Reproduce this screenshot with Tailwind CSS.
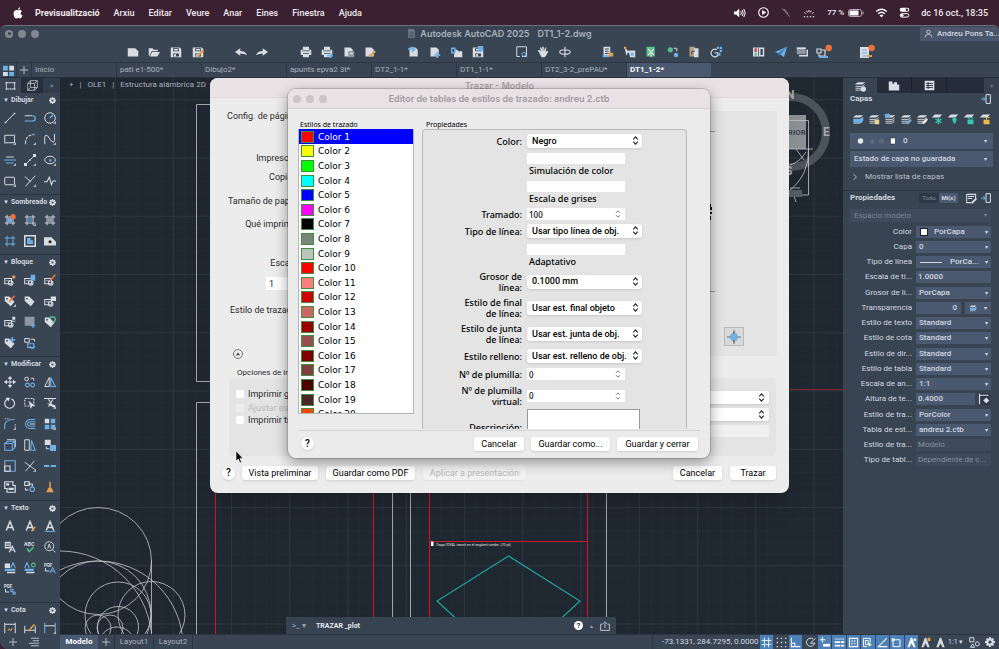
<!DOCTYPE html>
<html lang="ca">
<head>
    <meta charset="UTF-8">
    <meta name="viewport" content="width=device-width, initial-scale=1.0">
    <title>Autodesk AutoCAD 2025 - DT1_1-2.dwg</title>
    <script src="https://cdn.jsdelivr.net/npm/@tailwindcss/browser@4"></script>
</head>
<body class="h-screen overflow-hidden bg-[#3a2031] font-['Roboto',sans-serif] text-[8px] leading-[12px] text-[#d3d9e1]">
    <div class="flex h-full flex-col">
        <!-- Barra de menú -->
        <nav class="flex h-[25px] shrink-0 items-center justify-between pl-3 pr-[11px] text-[9px] font-medium text-[#f0e9ed]">
            <div class="flex items-center gap-[14px]">
                <svg data-icon="apple" class="-mr-[3px] h-3 w-3"></svg>
                <a href="#" class="font-bold">Previsualització</a>
                <a href="#">Arxiu</a>
                <a href="#">Editar</a>
                <a href="#">Veure</a>
                <a href="#">Anar</a>
                <a href="#">Eines</a>
                <a href="#">Finestra</a>
                <a href="#">Ajuda</a>
            </div>
            <div class="flex items-center gap-[11px]">
                <svg data-icon="volume" class="h-3 w-[14px]"></svg>
                <svg data-icon="play" class="size-[11px]"></svg>
                <svg data-icon="micoff" class="size-[11px]"></svg>
                <svg data-icon="sunrise" class="h-3 w-[14px]"></svg>
                <span class="flex items-center gap-1 text-[8px]">77 % <svg data-icon="battery" class="size-4"></svg></span>
                <svg data-icon="wifi" class="h-3 w-[13px]"></svg>
                <svg data-icon="control" class="size-[11px]"></svg>
                <span>dc 16 oct., 18:35</span>
            </div>
        </nav>

        <!-- Ventana de AutoCAD -->
        <div class="flex min-h-0 flex-1 flex-col overflow-hidden rounded-t-md rounded-bl-lg border-t border-[#6b6f7e] bg-[#394553]">
            <header class="flex h-[36px] shrink-0 flex-col">
                <div class="grid h-[15px] grid-cols-[1fr_auto_1fr] items-center">
                    <div class="flex gap-[5px] pl-[5px]">
                        <span class="flex size-2 items-center justify-center rounded-full bg-[#7f8791]"><i class="size-[3px] rounded-full bg-[#394553]"></i></span>
                        <span class="size-2 rounded-full bg-[#7f8791]"></span>
                        <span class="size-2 rounded-full bg-[#7f8791]"></span>
                    </div>
                    <h1 class="flex items-center gap-1 font-['Inter',sans-serif] text-[9px] font-semibold text-[#a9b2bd]">
                        <svg data-icon="dwg" class="size-[9px]"></svg>
                        Autodesk AutoCAD 2025 <span class="ml-1">DT1_1-2.dwg</span>
                    </h1>
                    <button class="flex h-[14px] w-[79px] items-center gap-1 justify-self-end whitespace-nowrap bg-[#4a566b] pl-1 text-[8px] font-medium">
                        <svg data-icon="user" class="size-[9px] shrink-0"></svg>Andreu Pons Ta...
                    </button>
                </div>
                <div id="toolbar" class="ml-[122px] grid w-[756px] flex-1 grid-cols-35 items-center"></div>
            </header>

            <!-- Pestañas de dibujos -->
            <div id="file-tabs" class="flex h-[15px] shrink-0 border-t border-[#2c3643] text-[#a9b2bd]">
                <button class="flex w-4 items-center justify-center" aria-label="Inicio"><svg data-icon="tiles" class="size-[11px]"></svg></button>
                <button class="flex w-[15px] items-center justify-center border-l border-[#2c3643]" aria-label="Nuevo"><svg data-icon="plus" class="size-2"></svg></button>
            </div>

            <div class="flex min-h-0 flex-1 border-t border-[#273040]">
                <!-- Paleta de herramientas -->
                <aside class="flex w-[60px] shrink-0 flex-col bg-[#3a4554]">
                    <div class="flex h-[15px] shrink-0">
                        <button class="flex w-[21px] items-center justify-center" aria-label="2D"><svg data-icon="rectangle" class="size-[11px]"></svg></button>
                        <button class="flex w-[22px] items-center justify-center bg-[#26303c]" aria-label="3D"><svg data-icon="cube" class="size-[11px]"></svg></button>
                        <button class="flex-1 bg-[#323d4b] text-[#8b96a3]">»</button>
                    </div>
                    <div id="palette" class="min-h-0 flex-1 overflow-hidden"></div>
                    <div class="flex h-[15px] shrink-0 items-center gap-3 pl-[9px]">
                        <button aria-label="Añadir"><svg data-icon="plus" class="size-2"></svg></button>
                        <button aria-label="Organizar"><svg data-icon="indent" class="size-[10px]"></svg></button>
                    </div>
                </aside>

                <div class="flex min-w-0 flex-1 flex-col">
                    <div class="flex min-h-0 flex-1">
                        <!-- Área de dibujo -->
                        <main class="relative min-w-0 flex-1 overflow-hidden bg-[#1f2730]">
                            <svg class="absolute inset-0 h-full w-full" viewBox="60 78 783 556" preserveAspectRatio="xMinYMin slice" fill="none" stroke="#c3c7cb" stroke-width=".8">
                                <defs>
                                    <pattern id="minor" x="114.5" y="157.5" width="11.65" height="11.65" patternUnits="userSpaceOnUse"><path d="M0 0H12M0 0V12" stroke="#252e39" stroke-width=".9" /></pattern>
                                    <pattern id="major" x="114.5" y="157.5" width="58.25" height="58.25" patternUnits="userSpaceOnUse"><path d="M0 .5H59M.5 0V59" stroke="#2b3540" stroke-width="1" /></pattern>
                                </defs>
                                <path d="M60 78H843V634H60Z" fill="url(#minor)" stroke="none" />
                                <path d="M60 78H843V634H60Z" fill="url(#major)" stroke="none" />
                                <path d="M300 104.500H196.500V381.500H300M300 402.500H196.500V634M392.500 480V634M410.500 480V634M606.500 480V634" />
                                <g stroke="#d01626" stroke-width="1.1">
                                    <path d="M215.500 480V634" />
                                    <path d="M373.500 480V634" />
                                    <path d="M429.500 480V634" />
                                    <path d="M587.500 480V634" />
                                    <path d="M429.500 541.500H587.500" />
                                </g>
                                <path d="M780 389.500H843" stroke="#8a2632" stroke-width="1" />
                                <path d="M508.500 556L437 601L508.500 667L580 601Z" stroke="#1fa8a8" stroke-width="1.1" />
                                <circle cx="98" cy="561" r="53.500" />
                                <circle cx="60" cy="643" r="92" />
                                <circle cx="98" cy="646" r="85" />
                                <circle cx="98" cy="614" r="53" />
                                <circle cx="118" cy="615" r="33" />
                                <circle cx="151.500" cy="615" r="33.500" />
                                <circle cx="118" cy="627" r="20.500" />
                                <circle cx="98" cy="628" r="13" />
                                <circle cx="110" cy="628" r="13" />
                                <circle cx="117" cy="645" r="18" />
                                <path d="M151.500 560V634" />
                                <path d="M431 541.500h2.500v4.500h-2.500z" fill="#fff" stroke="none" />
                                <text x="436" y="545.500" font-size="3.500" fill="#e5e7ea" stroke="none">Traça l'OVAL inscrit en el següent rombe. (10 pt)</text>
                                <!-- Cubo de vistas -->
                                <circle cx="791" cy="132" r="35" stroke="#4b535c" stroke-width="8" />
                                <path d="M776 115H806V149H776Z" fill="#8c9196" stroke="none" />
                                <path d="M789 120.500H808.500V195H790M808.500 149A48 48 0 0 1 790 190M789 149H813M796 149L804 160M790 165Q800 162 806 152M790 188H800M792 190L796 202" />
                                <path d="M788 190h14v7h-14z" fill="#555d66" stroke="none" />
                                <text x="768" y="135" font-size="8" font-weight="700" fill="#3b4148" stroke="none">SUPERIOR</text>
                                <text x="823" y="136" font-size="12" font-weight="700" fill="#a3a8ad" stroke="none">E</text>
                                <text x="786" y="99" font-size="12" font-weight="700" fill="#a3a8ad" stroke="none">N</text>
                                <text x="785" y="175" font-size="12" font-weight="700" fill="#a3a8ad" stroke="none">S</text>
                            </svg>
                            <div class="relative flex gap-[6px] pl-[9px] pt-[1px] text-[#a9b2bd]">
                                <span>+</span><span>|</span><span>OLE1</span><span>|</span><span>Estructura alámbrica 2D</span>
                            </div>
                            <!-- Línea de comandos -->
                            <form class="absolute bottom-0 left-[226px] flex h-[17px] w-[330px] items-center bg-[#384352] px-[6px]">
                                <span class="w-6 shrink-0 text-[#9aa5b3]">&gt;_ ▾</span>
                                <input type="text" value="TRAZAR _plot" aria-label="Comando" class="min-w-0 flex-1 bg-transparent text-[7px] font-bold text-[#e3e8ee]">
                                <button type="button" class="flex size-[9px] items-center justify-center rounded-full bg-white font-bold text-[#2c3643]">?</button>
                                <span class="mx-[6px] text-[5px] text-[#9aa5b3]">▲</span>
                                <button type="button" aria-label="Compartir"><svg data-icon="share" class="size-[10px]"></svg></button>
                            </form>
                        </main>

                        <!-- Capas y propiedades -->
                        <aside class="flex w-[156px] shrink-0 flex-col bg-[#394452]">
                            <div class="flex h-[15px] shrink-0 bg-[#242d39]">
                                <button class="flex w-[34px] items-center justify-center bg-[#394452]" aria-label="Capas"><svg data-icon="layerinfo" class="size-3"></svg></button>
                                <button class="flex w-[35px] items-center justify-center border-r border-[#1b222c]" aria-label="Bloques"><svg data-icon="folder" class="size-3"></svg></button>
                                <button class="flex w-[35px] items-center justify-center border-r border-[#1b222c]" aria-label="Lista"><svg data-icon="listbox" class="size-[11px]"></svg></button>
                                <button class="ml-auto w-[15px] bg-[#36404e] text-[#7f8b99]">»</button>
                            </div>
                            <section class="border-b border-[#2a3340] px-[6px] pb-[7px] pl-[7px]">
                                <div class="flex h-3 items-center justify-between pr-[2px]">
                                    <h2 class="font-bold">Capas</h2>
                                    <svg data-icon="dock" class="size-[10px]"></svg>
                                </div>
                                <div id="layer-tools" class="mt-1 flex h-5 items-center"></div>
                                <div class="mt-[4px] flex h-4 items-center bg-[#4a5870] px-[6px] font-medium">
                                    <svg data-icon="layerstate" class="h-2 w-[39px] shrink-0"></svg>
                                    <div class="relative flex-1">
                                        <select aria-label="Capa actual" class="block w-full appearance-none pl-2"><option>0</option></select>
                                        <i class="pointer-events-none absolute right-0 top-0 text-[6px] not-italic">▾</i>
                                    </div>
                                </div>
                                <div class="relative mt-[2px] bg-[#4a5870]">
                                    <select aria-label="Estado de capa" class="block h-4 w-full appearance-none pl-1 font-medium"><option>Estado de capa no guardada</option></select>
                                    <i class="pointer-events-none absolute right-[6px] top-[2px] text-[6px] not-italic">▾</i>
                                </div>
                                <button class="mt-[3px] flex h-[13px] items-center gap-[7px] pl-[2px] text-[#b9c1cb]"><svg data-icon="chevron" class="size-[6px]"></svg>Mostrar lista de capas</button>
                            </section>
                            <section class="pl-[7px] pr-2 pt-[1px]">
                                <div class="flex h-3 items-center">
                                    <h2 class="font-bold">Propiedades</h2>
                                    <button class="ml-auto h-[10px] w-5 bg-[#2f3946] text-[6px] leading-[10px] text-[#7f8b99]">Todo</button>
                                    <button class="mr-2 h-[10px] w-[19px] bg-[#4a5870] text-[6px] font-bold leading-[10px]">Mi(s)</button>
                                    <svg data-icon="quickselect" class="mr-1 size-[11px]"></svg>
                                    <svg data-icon="dock" class="size-[10px]"></svg>
                                </div>
                                <div class="relative mt-[5px] bg-[#3f4a5a] text-[#7b8795]">
                                    <select aria-label="Selección" disabled class="block h-[13px] w-full appearance-none pl-1"><option>Espacio modelo</option></select>
                                    <i class="absolute right-1 top-0 text-[6px] not-italic">▾</i>
                                </div>
                                <div id="props" class="mt-[2px] grid h-[244px] auto-rows-fr items-center"></div>
                            </section>
                        </aside>
                    </div>

                    <!-- Barra de estado -->
                    <footer class="flex h-[15px] shrink-0 items-stretch justify-between border-t border-[#2c3643] bg-[#394553]">
                        <div class="flex text-[#a9b2bd]">
                            <button class="w-[38px] bg-[#4a5870] font-bold text-white">Modelo</button>
                            <button class="flex w-[17px] items-center justify-center border-r border-[#2c3643]" aria-label="Nueva presentación"><svg data-icon="plus" class="size-2"></svg></button>
                            <button class="w-[39px] border-r border-[#2c3643]">Layout1</button>
                            <button class="w-[39px] border-r border-[#2c3643]">Layout2</button>
                        </div>
                        <div class="flex items-center border-l border-[#2c3643] pl-[9px] pr-[1px]">
                            <span class="w-[98px] whitespace-nowrap">-73.1331, 284.7295, 0.0000</span>
                            <div id="status" class="grid w-[188px] grid-cols-13"></div>
                            <select aria-label="Escala de anotación" class="w-[19px] appearance-none text-[7px]"><option>1:1 ▾</option></select>
                            <button class="flex w-[15px] justify-center" aria-label="Aislar"><svg data-icon="isolate" class="size-[11px]"></svg></button>
                            <button class="flex w-[16px] justify-center" aria-label="Personalizar"><svg data-icon="gear" class="size-[10px]"></svg></button>
                        </div>
                    </footer>
                </div>
            </div>
        </div>
    </div>

    <!-- Diálogo Trazar -->
    <div role="dialog" aria-label="Trazar - Modelo" class="absolute left-[210px] top-[78px] flex h-[415px] w-[579px] flex-col overflow-hidden rounded-lg bg-[#ececec] text-[9px] text-[#2b2b2b] shadow-xl">
        <header class="h-5 shrink-0 border-b border-[#dcd7d9] bg-[#e9e3e6] pt-[2px] text-center font-['Inter',sans-serif] font-semibold text-[#aaa5a8]">Trazar - Modelo</header>
        <div class="flex flex-1 justify-between">
            <div class="w-[89px] text-right">
                <p class="mt-3 h-3 whitespace-nowrap">Config. de página:</p>
                <p class="mt-[30px] h-3">Impresora:</p>
                <p class="mt-[7px] h-3">Copias:</p>
                <p class="mt-3 h-3 whitespace-nowrap">Tamaño de papel:</p>
                <p class="mt-[11px] h-3">Qué imprimir:</p>
                <p class="mt-[27px] h-3">Escala:</p>
                <input type="text" value="1" aria-label="Escala" class="ml-auto mt-2 block h-[13px] w-[33px] bg-white pl-[3px]">
                <p class="mt-[14px] h-3 whitespace-nowrap">Estilo de trazado:</p>
                <button aria-label="Contraer" class="ml-[23px] mt-[33px] flex size-[10px] items-center justify-center rounded-full border border-[#777]"><svg data-icon="caretup" class="size-[6px]"></svg></button>
                <h3 class="ml-[27px] mt-[9px] h-[10px] whitespace-nowrap text-left text-[8px] leading-[10px]">Opciones de impresión</h3>
            </div>
            <div class="mr-3 mt-[13px] flex h-[245px] w-[140px] flex-col items-end rounded-sm bg-[#e4e4e4]">
                <div class="mr-[62px] mt-5 flex h-[161px] w-[29px] justify-end border-y border-[#999] pr-[3px] pt-[68px]"><svg data-icon="papermark" class="h-6 w-4"></svg></div>
                <button aria-label="Centrar" class="mr-[33px] mt-[35px] flex h-[19px] w-5 shrink-0 items-center justify-center border border-[#b9b9b9] bg-[#d9d9d9]"><svg data-icon="center" class="size-[14px]"></svg></button>
            </div>
        </div>
        <div class="ml-[19px] mr-[13px] flex h-[78px] shrink-0 justify-between rounded-sm bg-[#e4e4e4] px-[7px]">
            <div class="pt-[10px]">
                <label class="flex h-3 items-center gap-1"><input type="checkbox" class="size-2 appearance-none rounded-[2px] bg-white">Imprimir grosores</label>
                <label class="mt-[2px] flex h-3 items-center gap-1 text-[#b8b8b8]"><input type="checkbox" disabled class="size-2 appearance-none rounded-[2px] bg-[#eee]">Ajustar escala</label>
                <label class="flex h-3 items-center gap-1"><input type="checkbox" class="size-2 appearance-none rounded-[2px] bg-white">Imprimir transp.</label>
            </div>
            <div class="w-[120px] pt-[13px]">
                <div class="relative"><select aria-label="Sombreado" class="block h-[13px] w-full appearance-none rounded-[3px] bg-white shadow-sm"></select><svg data-icon="updown" class="pointer-events-none absolute right-[3px] top-[2px] size-[9px]"></svg></div>
                <div class="relative mt-1"><select aria-label="Calidad" class="block h-[13px] w-full appearance-none rounded-[3px] bg-white shadow-sm"></select><svg data-icon="updown" class="pointer-events-none absolute right-[3px] top-[2px] size-[9px]"></svg></div>
                <input type="text" disabled aria-label="PPP" class="mt-1 block h-3 w-full bg-[#f0f0f0]">
            </div>
        </div>
        <footer class="flex h-[37px] shrink-0 items-center gap-2 pb-[3px] pl-3 pr-[13px] text-black">
            <button class="mr-[-1px] size-[13px] rounded-full bg-white text-[10px] font-medium shadow-sm">?</button>
            <button class="h-[14px] w-[76px] rounded-[3px] bg-white shadow-sm">Vista preliminar</button>
            <button class="h-[14px] w-[89px] rounded-[3px] bg-white shadow-sm">Guardar como PDF</button>
            <button disabled class="h-[14px] w-[103px] rounded-[3px] bg-[#f2f2f2] text-[#b8b8b8] shadow-xs">Aplicar a presentación</button>
            <button class="ml-auto h-[14px] w-[49px] rounded-[3px] bg-white shadow-sm">Cancelar</button>
            <button class="h-[14px] w-[46px] rounded-[3px] bg-white shadow-sm">Trazar</button>
        </footer>
    </div>

    <!-- Editor de tablas de estilos -->
    <div role="dialog" aria-label="Editor de tablas de estilos" class="absolute left-[288px] top-[89px] flex h-[369px] w-[422px] flex-col overflow-hidden rounded-lg bg-[#ebebeb] text-[9px] text-black shadow-[0_4px_14px_rgba(0,0,0,0.4)] ring-1 ring-black/15">
        <header class="grid h-5 shrink-0 grid-cols-[1fr_auto_1fr] items-center border-b border-[#d9d4d6] bg-[#e8e2e5]">
            <div class="flex gap-[5px] pl-[5px]">
                <span class="size-2 rounded-full bg-[#cbc6c8]"></span><span class="size-2 rounded-full bg-[#cbc6c8]"></span><span class="size-2 rounded-full bg-[#cbc6c8]"></span>
            </div>
            <h2 class="font-['Inter',sans-serif] font-semibold text-[#a09b9e]">Editor de tablas de estilos de trazado: andreu 2.ctb</h2>
        </header>
        <div class="mx-[10px] flex min-h-0 flex-1 gap-2 border-b border-[#d4d4d4] pt-[11px] font-['Noto_Sans',sans-serif]">
            <div class="w-[116px]">
                <h3 class="h-[9px] pl-[2px] text-[7px] leading-[9px]">Estilos de trazado</h3>
                <div class="h-[285px] overflow-hidden border border-t-0 border-[#b5b5b5] bg-white">
                    <ul id="colors" class="grid h-[292px] auto-rows-fr font-['DejaVu_Sans',sans-serif]"></ul>
                </div>
            </div>
            <div class="flex min-h-0 w-[265px] flex-col">
                <h3 class="h-[9px] pl-1 text-[7px] leading-[9px]">Propiedades</h3>
                <form id="style-form" class="h-[300px] overflow-hidden rounded-t-sm border border-b-0 border-[#b9b9b9] bg-[#e4e4e4] pt-[3px] font-medium leading-[11px]"></form>
            </div>
        </div>
        <footer class="flex h-[27px] shrink-0 items-center gap-[7px] pb-[2px] pl-[13px] pr-3">
            <button class="size-[13px] rounded-full bg-white text-[10px] font-medium shadow-sm">?</button>
            <button class="ml-auto h-[14px] w-[50px] rounded-[3px] bg-white shadow-sm">Cancelar</button>
            <button class="h-[14px] w-[79px] rounded-[3px] bg-white shadow-sm">Guardar como...</button>
            <button class="h-[14px] w-[81px] rounded-[3px] bg-white shadow-sm">Guardar y cerrar</button>
        </footer>
    </div>

    <!-- Puntero -->
    <svg class="pointer-events-none absolute left-[235px] top-[450px] h-[14px] w-2" viewBox="0 0 8 14"><path d="M1 1V11L3.300 9L5 13L6.500 12.300L5 8.500H8Z" fill="#000" stroke="#fff" stroke-width=".6" /></svg>

    <script>
        // Iconos, todos en una rejilla de 16x16
        const W = '#d8dde4', B = '#6cb0e8', G = '#55c08a', O = '#f0703a', Y = '#e0a050';
        const f = (c, d) => `<path d="${d}" fill="${c}" stroke="none"/>`;
        const s = (c, d, w = 1.3) => `<path d="${d}" stroke="${c}" stroke-width="${w}"/>`;
        const corner = f('#aab2bc', 'M16 12V16H12Z');
        const block = s(W, 'M1 6H10V13H1ZM6 12a3 3 0 1 0 6 0a3 3 0 1 0-6 0', 1.4) + s(W, 'M3 9H8', 1);
        const tag = f(W, 'M1 2H7L14 9L9 15L1 8Z') + f('#3a4554', 'M3 4h2v2h-2z');
        const layers = f(W, 'M5 3H15L11 6H1Z') + s(W, 'M2 8.500H11L14 6M2 11H11L14 8.500M2 13.500H11L14 11', 1.2);
        const hatch = s(W, 'M1 4H15M1 12H15M4 1V15M12 1V15', 1.2);
        const disk = f(W, 'M1 2H13L15 4V15H1Z') + f('#394553', 'M4 3h8v4h-8zM4 10h8v4h-8z') + f(W, 'M5 4h6v2h-6zM5 11h3v3h-3z');
        const page = f(W, 'M2 2H10L13 5V14H2Z');
        const printer = f(W, 'M4 1H12V5H15V12H1V5H4Z') + f('#394553', 'M3 6h10v1h-10z') + f(W, 'M4 10h8v5h-8z') + s('#394553', 'M4 10H12', 1);
        const letterA = c => s(c, 'M3 14L8 2L13 14M5 10H11', 2);
        const ICONS = {
            apple: f('#fff', 'M8 4.500C9.500 3.500 12 3.500 13.300 5.500C10.800 7 11.300 10.300 14 11.300C13 14 11.500 15.500 10 15.200C8.500 14.500 8 14.500 6.500 15.200C4 15.800 1.500 11 2.200 7.500C3 4 6 3.500 8 4.500ZM8 3.800C8 2 9.200.6 10.800.3C11 2.200 9.800 3.800 8 3.800Z'),
            volume: f('#fff', 'M0 6H3L7 2V14L3 10H0Z') + s('#fff', 'M9 5.500Q10.500 8 9 10.500M11 4Q13.500 8 11 12M13 2.500Q17 8 13 13.500'),
            play: s('#fff', 'M1 8a7 7 0 1 0 14 0a7 7 0 1 0-14 0', 1.6) + f('#fff', 'M6 4.500V11.500L12 8Z'),
            micoff: s('#a594a0', 'M3 2L14 14M6 3L12 10', 1.2),
            sunrise: s('#fff', 'M1 13H3M5 13H7M9 13H11M13 13H15M2 7L4 9M14 7L12 9M8 4V7M5 5L6 7M11 5L10 7', 1.3),
            battery: `<rect x=".5" y="4.500" width="13" height="7" rx="2" stroke="#b9a8b3"/>` + f('#fff', 'M1.500 5.500H10.500V10.500H1.500Z') + f('#b9a8b3', 'M14.500 6.500H15.500V9.500H14.500Z'),
            wifi: s('#fff', 'M1 6Q8 0 15 6M3.500 9Q8 5 12.500 9', 2) + f('#fff', 'M5.500 11Q8 9 10.500 11L8 14Z'),
            control: `<rect x="1" y="1" width="14" height="6" rx="3" fill="#fff" stroke="none"/><circle cx="11.500" cy="4" r="1.800" fill="#3a2031" stroke="none"/><rect x="1.700" y="9.700" width="12.600" height="5" rx="2.500" stroke="#fff" stroke-width="1.400"/><circle cx="4.500" cy="12" r="2" fill="#fff" stroke="none"/>`,
            dwg: f('#6d7884', 'M2 0H11L14 3V16H2Z') + s('#394553', 'M5 8a3 3 0 1 0 6 0a3 3 0 1 0-6 0M4 13H12'),
            user: s(W, 'M5 5a3 3 0 1 0 6 0a3 3 0 1 0-6 0M2 15Q2 9.500 8 9.500Q14 9.500 14 15', 1.4),
            tiles: f(B, 'M0 1H7V8H0ZM9 10H16V16H9Z') + f(W, 'M9 1H16V8H9ZM0 10H7V16H0Z'),
            plus: s('#b4bcc7', 'M8 0V16M0 8H16', 2),
            indent: s('#b4bcc7', 'M3 2H16M6 6H16M0 10H16M3 14H16', 1.6),
            newfile: f(W, 'M1 3H11L15 7V14H1Z'),
            open: f(W, 'M1 3H6L8 5H13V7H5L2 13H1ZM5.500 8H16L12.500 14H2.500Z'),
            save: disk,
            saveas: disk + s(Y, 'M7 14L15 6', 3),
            undo: f(W, 'M0 8L7 3V6.500Q14 6.500 16 12Q12 10 7 10V13Z'),
            redo: f(W, 'M16 8L9 3V6.500Q2 6.500 0 12Q4 10 9 10V13Z'),
            print: printer,
            plot: printer + s(B, 'M8 13H15M12 10L15 13L12 16', 1.8),
            publish: page + f('#8d96a2', 'M7 7H15V15H7Z') + f(W, 'M9 9h4v2h-4z'),
            pagesetup: page + s(Y, 'M7 14L15 7', 3),
            import: page + s(B, 'M0 4H7M5 1L9 4.500L5 8', 2),
            attach: page + s(B, 'M11 8V16M7 12H15', 2),
            xref: f(W, 'M4 5H8L10 7H15V15H4Z') + s(B, 'M1 3H5V9H1Z', 2),
            etransmit: disk + f(B, 'M8 0H15V7H8Z'),
            zoomwin: s(W, 'M1 1H14V14H8M1 1V14H5') + s(B, 'M8 11a2.500 2.500 0 1 0 5 0a2.500 2.500 0 1 0-5 0M13 13L15 15'),
            pan: f(W, 'M3 9L1 6L3 5L5 8L4 2H6L7 7V1H9V7L11 2H12.500L11.500 8L14 6L15 7.500L12 13L10 15H6Z'),
            orbit: s(W, 'M1 8a7 3 0 1 0 14 0a7 3 0 1 0-14 0M8 1V15', 1.5),
            sheet: f(W, 'M2 1H11V14H2Z') + s('#394553', 'M4 4H9M4 7H9M4 10H9') + f(B, 'M1 12h8v3h-8z') + f(Y, 'M9 9h6v5h-6z'),
            select: f(W, 'M1 2L8 9H5L3 13ZM6 6H15V15H8Z') + f(Y, 'M0 1h3v3h-3z') + f(B, 'M9 9h4v4h-4z'),
            geo: f(G, 'M2 1H13V14H2Z') + s(W, 'M4 4L12 12M12 4L4 12M8 9V15', 1.5),
            nodes: f(G, 'M1 5a3.500 3.500 0 1 0 7 0a3.500 3.500 0 1 0-7 0') + f(B, 'M9 12a3 3 0 1 0 6 0a3 3 0 1 0-6 0') + s(W, 'M9 3H13V7'),
            compare: f('#b9a488', 'M2 1H9V14H2Z') + f(W, 'M8 3H14V15H8Z') + s('#394553', 'M5 12V7H9'),
            count: s(W, 'M9 5A5 5 0 1 0 10 13V9H6', 1.6) + f(B, 'M9 1h3v3h-3zM13 1h3v3h-3zM13 5h3v3h-3zM10 9h4v4h-4z'),
            books: f(W, 'M0 2H15V14H0Z') + f('#c8404a', 'M2 3h3v5h-3z') + f(G, 'M2 9h3v4h-3z') + f('#394553', 'M7 3h1v10h-1zM10 4h3v8h-3z'),
            send: f(B, 'M0 8L16 1L12 15L7 11Z') + f('#2f74ad', 'M7 11L16 1L5 9V14Z'),
            windows: f('#8d96a2', 'M1 2H13V11H1Z') + f(W, 'M1 2h12v2h-12zM14 5h2v9h-12v-2h10z'),
            feedback: s(W, 'M1 5H5V9H1ZM6 6H9V12H3V10', 1.2) + f(B, 'M3 12h9v2h-9z') + f(O, 'M9.500 4a3.200 3.200 0 1 0 6.400 0a3.200 3.200 0 1 0-6.400 0'),
            clipboard: f(W, 'M1 3H10V14H1Z') + s(B, 'M3 6H8M3 9H8M3 12H8', 1.2) + f(O, 'M9.500 4a3.200 3.200 0 1 0 6.400 0a3.200 3.200 0 1 0-6.400 0') + f(Y, 'M8 11h5v2h-5z'),
            rectangle: s(W, 'M2 4H14V13H2Z') + f(W, 'M1 3h2v2h-2zM13 3h2v2h-2zM1 12h2v2h-2zM13 12h2v2h-2z'),
            cube: s(W, 'M1 5H11V15H1ZM1 5L5 1H15L11 5M15 1V11L11 15M5 1V11H15M1 15L5 11', 1),
            line: s(W, 'M2 14L14 2') + f(W, 'M1 13h2v2h-2zM13 1h2v2h-2z'),
            polyline: s(W, 'M1 5H11') + s(B, 'M11 5Q15 5 15 8.500Q15 12 11 12H1', 1.6),
            circle: s(W, 'M1 8a7 7 0 1 0 14 0a7 7 0 1 0-14 0') + s(B, 'M8 8L12 4', 1.8) + corner,
            rect: s(W, 'M1 3H14V13H1Z') + f(B, 'M0 12h2v2h-2zM13 2h2v2h-2z') + corner,
            arc: `<path d="M2 14Q2 3 13 2" stroke="${W}" stroke-width="1.400" stroke-dasharray="4 1.500"/>` + f(B, 'M1 13h2v2h-2zM12 1h2v2h-2z') + corner,
            spline: s(W, 'M1 14V5Q2 1 5 4L10 11Q13 14 14 10V2') + f(B, 'M0 13h2v2h-2zM13 1h2v2h-2z') + corner,
            mline: s(W, 'M3 4H13') + s(B, 'M0 8H16M3 12H13', 1.4) + corner,
            xline: s(W, 'M2 14L14 2', 1.2) + f(W, 'M0 12h4v4h-4zM12 0h4v4h-4zM7 7h2v2h-2z') + corner,
            ellipse: s(W, 'M1 8a7 5 0 1 0 14 0a7 5 0 1 0-14 0') + f(B, 'M7 7h3v3h-3z') + corner,
            region: `<rect x="1" y="3" width="13" height="10" rx="1" stroke="${W}" stroke-width="1.300"/>` + corner,
            split: s(W, 'M1 2L9 9M15 1L2 15', 1.3) + corner,
            zigzag: s(W, 'M0 9H4L7 3L10 13L12 8H16', 1.4),
            hatchnew: hatch + f(B, 'M5 5h6v6h-6z') + f(O, 'M8.500 3.500a3.500 3.500 0 1 0 7 0a3.500 3.500 0 1 0-7 0'),
            hatch: hatch + f('#4d7ea8', 'M5 5h6v6h-6z') + corner,
            gradient: hatch + f('#8d96a2', 'M5 5h6v6h-6z'),
            boundary: s(B, 'M1 4H15M1 12H15M4 1V15M12 1V15', 1.3),
            wipeout: s(W, 'M1 1H15V15H1Z', 2) + f(B, 'M4 4H9V7H12V12H4Z'),
            mask: f(W, 'M0 3H10L16 9V14H0Z') + f('#222', 'M6 9a2 2 0 1 0 4 0a2 2 0 1 0-4 0'),
            blocknew: block + f(Y, 'M11 2h4v4h-4z'),
            blockins: block + f(B, 'M9 1H15V9H9Z'),
            blockedit: block + s(O, 'M8 9L15 1', 2),
            tagedit: tag + s(O, 'M7 9L14 1', 2) + corner,
            tag: tag,
            blocktable: block + f(W, 'M9 2H16V8H9Z'),
            blockattr: block + f(W, 'M11 1h4v4h-4z') + s(W, 'M10 7H15'),
            base: f('#8d96a2', 'M1 1H14V13H1Z') + s(B, 'M12 10V16M9 13H15', 1.6),
            tagsync: tag + s(G, 'M8 4a3.500 3.500 0 1 1 3 4', 1.8),
            tagadd: tag + s(B, 'M11 0V8M7 4H15', 2),
            blockswap: s(W, 'M1 2H7V7H1ZM9 3H14V6') + s(B, 'M5 9H13V14H5ZM8 12a3 3 0 1 0 6 0', 1.6),
            move: s(W, 'M8 1V15M1 8H15', 1.3) + f(W, 'M8 0L11 4H5ZM8 16L5 12H11ZM0 8L4 5V11ZM16 8L12 11V5Z'),
            copy: s(W, 'M1 4a2.500 2.500 0 1 0 5 0a2.500 2.500 0 1 0-5 0M9 3H13V6') + s(B, 'M2 12a2.500 2.500 0 1 0 5 0a2.500 2.500 0 1 0-5 0M9 12a2.500 2.500 0 1 0 5 0a2.500 2.500 0 1 0-5 0', 1.5),
            mirror: s(W, 'M7 2V14H1Z') + s(B, 'M9 2L15 14H9Z', 1.5),
            rotate: s(W, 'M10 2.500A6.500 6.500 0 1 1 5 2.500', 1.5) + f(W, 'M2 1H8L6 6Z'),
            stretch: `<path d="M1 2H13V12H1Z" stroke="${W}" stroke-width="1.500" stroke-dasharray="2.500 1.500"/>` + f(W, 'M6 5L15 12H11L9 16Z'),
            trim: s(W, 'M0 2H16M6 3L12 13M12 3L6 13', 1.5) + f(W, 'M4 8L15 11V15L9 12Z') + corner,
            fillet: `<path d="M1 1H8M15 8V14" stroke="${W}" stroke-dasharray="2 1"/>` + s(B, 'M1 15V10Q1 2 14 2', 1.5) + corner,
            offset: s(B, 'M15 2H8A6 6 0 0 0 8 14H15M15 5H8A3 3 0 0 0 8 11H15', 1.4) + s(W, 'M15 8H8'),
            array: f(W, 'M1 1h6v6h-6z') + f(B, 'M9 1h6v6h-6zM1 9h6v6h-6zM9 9h6v6h-6z') + corner,
            scale3d: s(W, 'M4 1H15V11') + s(B, 'M1 6H11V15H1ZM1 6L5 3H14L11 6M14 3V12L11 15', 1.4),
            align: s(W, 'M1 1H7V15H1Z') + s(B, 'M10 2L15 15H9Z', 1.4),
            replace: f(W, 'M1 1H9V8H1Z') + f(B, 'M8 8H16V16H8Z') + s(W, 'M3 10V13H7', 1.3),
            scale: s(B, 'M1 1H15V15H1Z', 1.5) + s(W, 'M1 8H8V15H1Z', 1.5),
            break: s(W, 'M1 3L15 13M14 1L2 15', 1.2) + corner,
            join: s(B, 'M0 8H7M9 8H16', 2.4),
            group: s(W, 'M1 1H12V6H15V15H4V10H1Z', 1.6) + f(W, 'M3 3h4v3h-4zM6 9h7v3h-7z'),
            convert: s(W, 'M1 1H7V6H1ZM5 4H11V8', 1.5) + s(B, 'M8 11a3 3 0 1 0 6 0a3 3 0 1 0-6 0', 1.5) + s(W, 'M2 9V12H6', 1.4),
            purge: f(Y, 'M7 1h2v9h-2zM6 9H10L13 15H3Z'),
            mtext: letterA(W),
            textedit: letterA(W) + s(Y, 'M10 15L15 9', 1.8),
            textul: letterA(W) + s(B, 'M1 15.500H15', 1.4),
            textcopy: f(W, 'M1 1h8v9h-8z') + s('#3a4554', 'M2 4H8M2 7H8') + s(W, 'M7 15L11 7L15 15M9 12H13', 1.6),
            spell: `<text x="0" y="6" font-size="7" font-weight="700" fill="${W}" stroke="none">ABC</text>` + s(G, 'M4 10L7 14L13 8', 2),
            find: s(W, 'M1 7a6 6 0 1 0 12 0a6 6 0 1 0-12 0M11 11L15 15M5 10L7 4L9 10', 1.2),
            style: f(W, 'M1 2h7v6h-7z') + s(B, 'M9 8L12 1L15 8', 1.5) + f(B, 'M1 9h14v3h-14z') + f(W, 'M4 13h11v2h-11z'),
            styleupd: s(B, 'M1 8L4 1L7 8', 1.5) + s(G, 'M10 4a2.500 2.500 0 1 0 5 0a2.500 2.500 0 1 0-5 0', 1.4) + f(B, 'M1 9h12v3h-12z') + f(W, 'M3 13h11v2h-11z'),
            pdftext: `<text x="0" y="6" font-size="6" font-weight="700" fill="${W}" stroke="none">PDF</text>` + s(W, 'M2 8V12H7') + s(B, 'M8 15L11.500 7L15 15M9 12H14', 1.3),
            pdfline: `<text x="0" y="6" font-size="6" font-weight="700" fill="${W}" stroke="none">PDF</text>` + s(W, 'M2 8V12H7') + s(B, 'M8 10L14 14M9 8h3v3h-3zM12 12h3v3h-3z', 1.3),
            dim: s(W, 'M1 1V15M15 1V15M1 3H15') + s(Y, 'M5 12L7 9L9 12L11 8', 1.3),
            dimedit: s(W, 'M1 5V15M15 5V15M1 11H15') + s(Y, 'M6 12L14 3', 2),
            dimlin: s(B, 'M1 1V15M15 1V15', 1.4) + s(W, 'M1 5H15') + corner,
            layerinfo: layers + f(W, 'M9 12a3.500 3.500 0 1 0 7 0a3.500 3.500 0 1 0-7 0'),
            folder: f(W, 'M1 2H6V5H8V3H12V6H15V14H1Z'),
            listbox: f(W, 'M1 1H15V15H1Z') + s('#242d39', 'M3 5H13M3 8H13M3 11H13M6 3V13'),
            dock: s(W, 'M8 1H15V15H8Z', 1.6) + s(B, 'M0 8H7M4 5L7 8L4 11', 1.6),
            layer1: layers + f(B, 'M2 8H12L15 5V10L12 13H2Z'),
            layer2: layers + f('#e8d48a', 'M9 9h6v6h-6z'),
            layer3: layers + f(B, 'M1 1h7v5h-7z'),
            layer4: layers + s(B, 'M8 11L11 14L15 9', 1.8),
            layer5: layers + s('#fff', 'M9 14L15 8', 2.4),
            layer6: f(W, 'M5 2H15L11 6H1Z') + s('#38c4b0', 'M10 6V15M6 8L14 13M14 8L6 13', 1.8),
            layer7: f(W, 'M5 2H15L11 6H1Z') + f('#38c4b0', 'M7 9a3 3 0 1 1 6 0L11 14H9Z'),
            layer8: f(W, 'M5 2H15L11 6H1Z') + f('#38c4b0', 'M6 9h8v6h-8z') + s('#38c4b0', 'M8 9V6H12V9', 1.5),
            layer9: f(W, 'M5 2H15L11 6H1Z') + f('#e8b94a', 'M6 9h8v6h-8z') + s('#e8b94a', 'M10 9V6H14', 1.5),
            chevron: s('#b9c1cb', 'M4 1L12 8L4 15', 2.4),
            quickselect: s(W, 'M1 2H14V8M1 2V14H7M3 5H12M3 8H9', 1.6) + s(W, 'M8 15L15 8', 2.6),
            lineheight: s(W, 'M2 1V15M2 3H14', 1.6) + f(W, 'M11 6L15 10L11 14L7 10Z'),
            share: s(W, 'M4 5H1V15H15V5H12M8 11V2') + s(B, 'M4.500 5L8 1L11.500 5', 1.6),
            center: s('#555', 'M8 0V16M0 8H16', 1) + f(B, 'M5 4h6l1 1v6l-1 1h-6l-1-1v-6z') + f('#555', 'M6.500 2.500h3L8 4.500ZM6.500 13.500h3L8 11.500Z'),
            caretup: f('#555', 'M2 11L8 4L14 11Z'),
            papermark: f('#111', 'M12 0H15V3H16V6H14V8H16V10H12V6H13V4H12ZM13 12H15V16H13Z'),
            updown: s('#222', 'M4 6L8 1.500L12 6M4 10L8 14.500L12 10', 1.9),
            updownsm: s('#777', 'M5 6L8 3L11 6M5 10L8 13L11 10', 1.6),
            grid: s('#fff', 'M1 5H15M1 11H15M5 1V15M11 1V15', 1.2),
            snap: f(W, 'M1 1h2v2h-2zM7 1h2v2h-2zM13 1h2v2h-2zM1 7h2v2h-2zM7 7h2v2h-2zM13 7h2v2h-2zM1 13h2v2h-2zM7 13h2v2h-2zM13 13h2v2h-2z'),
            ortho: s('#fff', 'M2 1V14H15M2 9H7V14', 1.5),
            polar: s(W, 'M12 3A6 6 0 1 0 14 9M8 9L15 2M8 9H15', 1.4),
            dynin: s('#fff', 'M1 4H9M5 0V8', 1.6) + f('#fff', 'M6 10h10v4h-10z'),
            weight: s('#fff', 'M1 3H15', 1) + s('#fff', 'M1 7.500H9M1 12.500H9M10 7.500H15M10 12.500H15', 2.4),
            transp: `<path d="M2 2H14V14H2Z" stroke="#fff" stroke-width="1.500"/><path d="M4 6H12M4 10H12M6 4V12M10 4V12" stroke="#fff" stroke-dasharray="1.500 1"/>`,
            cycle: s('#fff', 'M2 2H12V8M2 2V14H7M5 5H9V11H5Z', 1.4) + f('#fff', 'M9 7L15 12H12L10 15Z'),
            angle: s('#fff', 'M14 2L2 14H15', 1.5),
            osnap: s('#fff', 'M3 4H13V14H3Z', 1.4) + f('#fff', 'M1 2h4v4h-4z'),
            anno: f('#fff', 'M7 1H9L14 15H11L8 9L5 15H2Z') + f('#fff', 'M11 4a2 2 0 1 0 4 0a2 2 0 1 0-4 0'),
            annoauto: f(W, 'M7 1H9L14 15H11L8 9L5 15H2Z') + f(Y, 'M11 1h4v5h-4z'),
            annoscale: f(W, 'M7 1H9L14 15H11L8 9L5 15H2Z'),
            isolate: s(W, 'M1 1H7V7H1ZM9 10a3 3 0 1 0 6 0a3 3 0 1 0-6 0M5 10L8 15H2Z', 1.4),
            gear: s(W, 'M8 0V16M0 8H16M2.500 2.500L13.500 13.500M13.500 2.500L2.500 13.500', 3) + f(W, 'M2 8a6 6 0 1 0 12 0a6 6 0 1 0-12 0') + f('#394553', 'M5.500 8a2.500 2.500 0 1 0 5 0a2.500 2.500 0 1 0-5 0'),
            layerstate: `<circle cx="-22" cy="8" r="5.500" fill="#e3e8ee" stroke="none"/><rect x="-2" y="5" width="7" height="9" fill="#5d6b82" stroke="none"/><circle cx="20" cy="8" r="5" fill="#5d6b82" stroke="none"/><rect x="38" y="2" width="11" height="12" fill="#fff" stroke="#222"/>`,
        };
        const icon = (name, cls = 'size-3') => `<svg data-icon="${name}" class="${cls}"></svg>`;
        const byId = id => document.getElementById(id);

        // Barra de herramientas; '' deja un hueco entre grupos
        byId('toolbar').innerHTML = ['newfile', 'open', 'save', 'saveas', '', 'undo', 'redo', '', 'print', 'plot', 'publish', 'pagesetup', '',
            'import', 'attach', 'xref', 'etransmit', '', 'zoomwin', 'pan', 'orbit', '', 'sheet', 'select', 'geo', 'nodes', 'compare', 'count', '',
            'books', 'send', 'windows', 'feedback', '', 'clipboard']
            .map(n => n ? `<button aria-label="${n}" class="flex justify-center">${icon(n, n === 'feedback' || n === 'clipboard' ? 'size-4' : 'size-3')}</button>` : '<span></span>').join('');

        byId('file-tabs').insertAdjacentHTML('beforeend', ['Inicio', 'pati e1-500*', 'Dibujo2*', 'apunts epva2 3t*', 'DT2_1-1*', 'DT1_1-1*', 'DT2_3-2_prePAU*', 'DT1_1-2*']
            .map((t, i) => `<button class="w-[85px] border-l border-[#2c3643] pl-[3px] text-left ${i === 7 ? 'bg-[#4a5870] font-bold text-white' : ''}">${t}</button>`).join(''));

        // Paleta lateral
        const sections = {
            Dibujar: ['line', 'polyline', 'circle', 'rect', 'arc', 'spline', 'mline', 'xline', 'ellipse', 'region', 'split', 'zigzag'],
            Sombreado: ['hatchnew', 'hatch', 'gradient', 'boundary', 'wipeout', 'mask'],
            Bloque: ['blocknew', 'blockins', 'blockedit', 'tagedit', 'tag', 'blocktable', 'blockattr', 'base', 'tagsync', 'tagadd', 'blockswap'],
            Modificar: ['move', 'copy', 'mirror', 'rotate', 'stretch', 'trim', 'fillet', 'offset', 'array', 'scale3d', 'align', 'replace', 'scale', 'break', 'join', 'group', 'convert', 'purge'],
            Texto: ['mtext', 'textedit', 'textul', 'textcopy', 'spell', 'find', 'style', 'styleupd', 'pdftext', 'pdfline'],
            Cota: ['dim', 'dimedit', 'dimlin'],
        };
        byId('palette').innerHTML = Object.entries(sections).map(([name, tools]) => `
            <section class="border-b border-[#2a3340] pb-[3px]">
                <h2 class="flex h-[14px] items-center pl-[3px] pr-1 text-[7px] font-bold"><i class="w-2 text-[6px] not-italic">▼</i>${name}${icon('gear', 'ml-auto size-[7px]')}</h2>
                <div class="grid auto-rows-[21px] grid-cols-3 items-center">${tools.map(t => `<button aria-label="${t}" class="flex justify-center">${icon(t)}</button>`).join('')}</div>
            </section>`).join('');

        byId('layer-tools').innerHTML = [1, 2, 3, 4, 5, 6, 7, 8, 9].map(n => `<button aria-label="Capa ${n}" class="flex flex-1 justify-center">${icon('layer' + n)}</button>`).join('');

        // Propiedades: etiqueta, valor, tipo
        const props = [['Color', 'PorCapa', 'color'], ['Capa', '0'], ['Tipo de línea', 'PorCa...', 'ltype'], ['Escala de ti...', '1.0000', 'input'],
            ['Grosor de lí...', 'PorCapa'], ['Transparencia', '0', 'transp'], ['Estilo de texto', 'Standard'], ['Estilo de cota', 'Standard'],
            ['Estilo de dir...', 'Standard'], ['Estilo de tabla', 'Standard'], ['Escala de an...', '1:1'], ['Altura de te...', '0.4000', 'height'],
            ['Estilo de tra...', 'PorColor'], ['Tabla de est...', 'andreu 2.ctb'], ['Estilo de tra...', 'Modelo', 'off'], ['Tipo de tabl...', 'Dependiente de c...', 'off']];
        byId('props').innerHTML = props.map(([label, value, kind], i) => {
            const select = pad => `<select id="p${i}" class="block h-3 w-full appearance-none bg-[#4a5870] font-medium ${pad}"><option>${value}</option></select><i class="pointer-events-none absolute right-[3px] top-0 text-[6px] not-italic">▾</i>`;
            let field = select('pl-[3px]');
            if (kind === 'color') field = select('pl-[18px]') + '<i class="absolute left-[5px] top-[3px] size-[6px] bg-white ring-1 ring-[#222]"></i>';
            if (kind === 'ltype') field = select('pl-[34px]') + '<i class="absolute left-1 top-[6px] h-px w-[22px] bg-[#d3d9e1]"></i>';
            if (kind === 'input') field = `<input id="p${i}" value="${value}" class="block h-3 w-full bg-[#4a5870] pl-[2px] font-medium">`;
            if (kind === 'transp') field = `<div class="flex gap-1"><input id="p${i}" value="${value}" class="h-3 w-[45px] bg-[#4a5870] pr-1 text-right font-medium"><button aria-label="Transparencia por capa" class="flex h-3 flex-1 items-center justify-between bg-[#4a5870] px-1 text-[6px]">${icon('layer1', 'size-2')}▾</button></div>`;
            if (kind === 'height') field = `<div class="flex gap-[3px]"><input id="p${i}" value="${value}" class="h-3 w-[59px] bg-[#4a5870] pl-[2px] font-medium"><button aria-label="Altura" class="bg-[#2f3946]">${icon('lineheight')}</button></div>`;
            if (kind === 'off') field = `<input id="p${i}" value="${value}" disabled class="block h-3 w-full bg-[#3f4a5a] pl-[2px] text-[#8490a0]">`;
            return `<div class="grid grid-cols-[62px_1fr] items-center gap-1"><label for="p${i}" class="whitespace-nowrap text-right">${label}</label><div class="relative">${field}</div></div>`;
        }).join('');

        byId('status').innerHTML = [['grid', 1], ['snap', 0], ['ortho', 1], ['polar', 0], ['dynin', 1], ['weight', 1], ['transp', 1], ['cycle', 1], ['angle', 1], ['osnap', 1], ['anno', 1], ['annoauto', 0], ['annoscale', 0]]
            .map(([n, on]) => `<button aria-label="${n}" class="flex h-[14px] items-center justify-center border-r border-[#394553] ${on ? 'bg-[#4c80b8]' : ''}">${icon(n, 'size-[11px]')}</button>`).join('');

        // Colores del estilo de trazado
        const colors = ['#ff0000', '#ffff00', '#00ff00', '#00ffff', '#0000ff', '#ff00ff', '#000000', '#7c857c', '#bcc4bc', '#ff0000', '#ff7f7f', '#d00000', '#cc6666', '#9d0000', '#9a4d4d', '#7f0000', '#7f3f3f', '#4c0000', '#4c2626', '#ff4500'];
        byId('colors').innerHTML = colors.map((c, i) => `
            <li class="flex items-center gap-1 pl-[2px] pt-px ${i === 0 ? 'bg-[#0000ff] text-white' : ''}"><i class="h-3 w-[13px] border border-[#3f8f3f]" style="background:${c}"></i>Color ${i + 1}</li>`).join('');

        // Formulario del editor
        const sel = (id, v) => `<div class="relative w-[115px]"><select id="${id}" class="block h-[14px] w-full appearance-none rounded-[3px] bg-white pl-[5px] font-['Roboto',sans-serif] shadow-sm"><option>${v}</option></select>${icon('updown', 'pointer-events-none absolute right-[2px] top-[2px] size-[9px]')}</div>`;
        const num = (id, v) => `<div class="relative w-[98px]"><input id="${id}" value="${v}" class="block h-3 w-full bg-white pl-[2px] text-[8px]">${icon('updownsm', 'absolute right-[2px] top-[1px] size-[10px]')}</div>`;
        const row = (h, id, label, field) => `<div class="grid ${h} grid-cols-[99px_1fr] items-center gap-[5px]"><label for="${id}" class="justify-self-end text-right">${label}</label>${field}</div>`;
        const sample = (label, pt) => `<div class="ml-[104px] ${pt}"><div class="h-[11px] w-[98px] bg-white"></div><p class="h-[13px] pl-[2px] leading-[13px]">${label}</p></div>`;
        byId('style-form').innerHTML =
            row('h-4', 'color', 'Color:', sel('color', 'Negro')) +
            sample('Simulación de color', 'pt-1') +
            sample('Escala de grises', 'pt-1') +
            row('h-[18px]', 'tramado', 'Tramado:', num('tramado', '100')) +
            row('h-4', 'tipo', 'Tipo de línea:', sel('tipo', 'Usar tipo línea de obj.')) +
            sample('Adaptativo', 'pt-[5px]') +
            row('h-[27px]', 'grosor', 'Grosor de<br>línea:', sel('grosor', '0.1000 mm')) +
            row('h-[26px]', 'final', 'Estilo de final<br>de línea:', sel('final', 'Usar est. final objeto')) +
            row('h-[26px]', 'junta', 'Estilo de junta<br>de línea:', sel('junta', 'Usar est. junta de obj.')) +
            row('h-[18px]', 'relleno', 'Estilo relleno:', sel('relleno', 'Usar est. relleno de obj.')) +
            row('h-[18px]', 'plumilla', 'Nº de plumilla:', num('plumilla', '0')) +
            row('h-[25px]', 'virtual', 'Nº de plumilla<br>virtual:', num('virtual', '0')) +
            row('h-[38px]', 'desc', 'Descripción:', '<textarea id="desc" class="h-9 w-[113px] resize-none border border-[#999] bg-white"></textarea>');

        document.querySelectorAll('svg[data-icon]').forEach(el => {
            el.setAttribute('viewBox', '0 0 16 16');
            el.setAttribute('fill', 'none');
            el.innerHTML = ICONS[el.dataset.icon];
        });
    </script>
</body>
</html>
